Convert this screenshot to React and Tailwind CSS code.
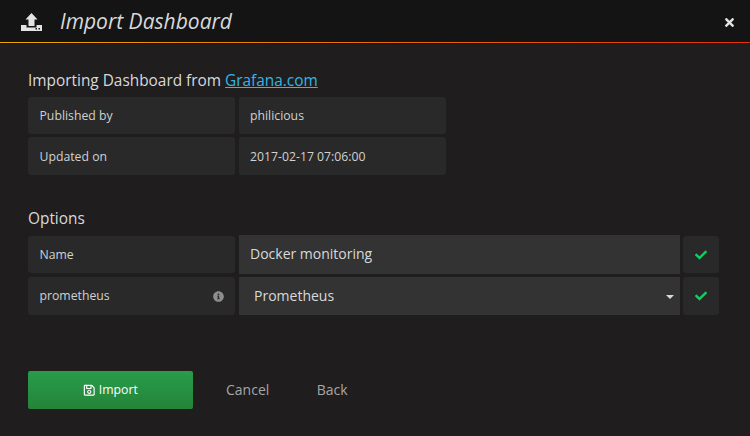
import React from "react";
import { FaCheck, FaInfoCircle, FaRegSave, FaTimes } from "react-icons/fa";

const UploadIcon = () => (
  <svg className="w-[21px] h-[19px] mt-[1px]" viewBox="0 0 21 19" fill="#e3e3e3">
    <path d="M10.5 0 L16.5 6.5 H13.5 V13 H7.5 V6.5 H4.5 Z" />
    <path d="M0 12 H5.5 V14.5 H15.5 V12 H21 V18 H0 Z" />
    <rect x="14.5" y="15" width="1.5" height="1.5" fill="#141414" />
    <rect x="17.5" y="15" width="1.5" height="1.5" fill="#141414" />
  </svg>
);

const Label = ({ children, className = "" }) => (
  <div className={`w-[207px] shrink-0 bg-[#292929] rounded-[3px] pl-[11.5px] pr-[11px] flex items-center justify-between text-[12.25px] text-[#d0d1d2] ${className}`}>
    {children}
  </div>
);

const Value = ({ children, className = "" }) => (
  <div className={`w-[207px] shrink-0 bg-[#292929] rounded-[3px] px-[11px] flex items-center text-[12.25px] text-[#d0d1d2] ${className}`}>
    {children}
  </div>
);

const CheckBox = ({ className = "" }) => (
  <div className={`w-9 shrink-0 bg-[#292929] rounded-[3px] flex items-center justify-center ${className}`}>
    <FaCheck className="text-[12px] text-[#0fd05f]" />
  </div>
);

export default function App() {
  return (
    <div className="w-[750px] h-[436px] overflow-hidden bg-[#1f1d1e] font-['Open_Sans',sans-serif] text-[#d8d9da]">
      <header className="h-[44px] bg-[#141414] flex items-center pl-[21px] pr-[14px] relative">
        <UploadIcon />
        <h1 className="ml-[18px] text-[21px] italic font-normal text-[#d8d9da]">Import Dashboard</h1>
        <FaTimes className="ml-auto text-[13px] text-[#e3e3e3]" />
        <div className="absolute left-0 right-0 top-[42px] h-px overflow-hidden">
          <div className="h-4 bg-[linear-gradient(to_right,#f0a800,#e8300c)]" />
        </div>
      </header>

      <main className="pl-[28px]">
        <h2 className="mt-[27px] h-[26px] text-[15.4px] leading-[20px] font-normal text-[#d8d9da]">
          Importing Dashboard from{" "}
          <a className="text-[#33b5e5] underline" href="#grafana">Grafana.com</a>
        </h2>

        <div className="flex flex-col gap-[3px]">
          <div className="flex gap-1 h-[37px]">
            <Label className="pt-px">Published by</Label>
            <Value className="pt-px">philicious</Value>
          </div>
          <div className="flex gap-1 h-[38px]">
            <Label className="pt-[2px]">Updated on</Label>
            <Value className="pt-[2px]">2017-02-17 07:06:00</Value>
          </div>
        </div>

        <h2 className="mt-[34px] h-[20px] text-[15.4px] leading-[20px] font-normal">Options</h2>

        <div className="mt-[6px] flex flex-col gap-[3px]">
          <div className="flex gap-1 h-[39px]">
            <Label className="my-px pt-px">Name</Label>
            <div className="w-[441px] bg-[#333333] flex items-center px-[11px] pb-px text-sm text-[#d8d9da]">
              Docker monitoring
            </div>
            <CheckBox className="-ml-[1px] my-px" />
          </div>
          <div className="flex gap-1 h-[38px]">
            <Label>
              prometheus
              <FaInfoCircle className="text-[11px] text-[#8e8e8e]" />
            </Label>
            <div className="w-[441px] bg-[#333333] flex items-center justify-between pl-[15px] pr-[6px] text-sm text-[#d8d9da]">
              Prometheus
              <span className="mt-px w-0 h-0 border-x-4 border-x-transparent border-t-4 border-t-[#d8d9da]" />
            </div>
            <CheckBox className="-ml-[1px]" />
          </div>
        </div>

        <div className="mt-[56px] flex items-center">
          <button className="w-[165px] h-[38px] rounded-[2px] bg-[linear-gradient(to_bottom,#299c4a,#248439)] text-white text-[12.25px] flex items-center justify-center gap-[3px]">
            <FaRegSave className="text-[12.5px]" />
            Import
          </button>
          <span className="ml-[33px] text-sm text-[#a6a6a6]">Cancel</span>
          <span className="ml-[47.5px] text-sm text-[#a6a6a6]">Back</span>
        </div>
      </main>
    </div>
  );
}
